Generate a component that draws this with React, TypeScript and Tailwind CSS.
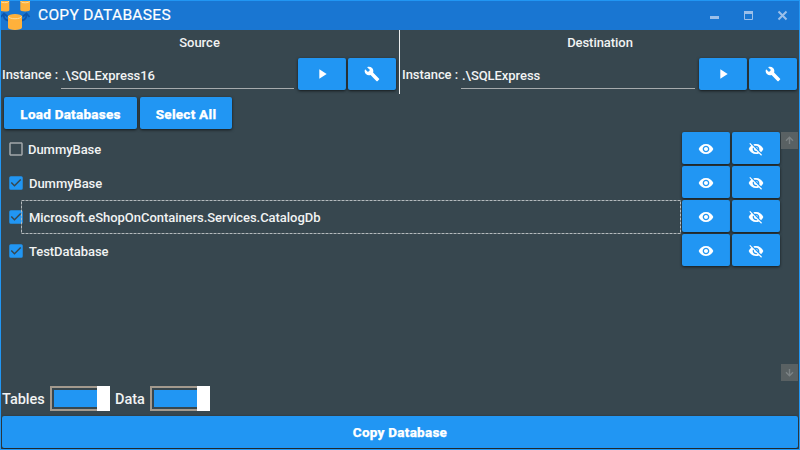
import type { ReactNode } from 'react';
import { MdPlayArrow, MdBuild, MdVisibility, MdVisibilityOff, MdCheckBox, MdCheckBoxOutlineBlank } from 'react-icons/md';

function RaisedButton({ className = '', children }: { className?: string; children: ReactNode }) {
  return (
    <button
      className={`flex h-8 shrink-0 items-center justify-center rounded-[2px] bg-[#2196f3] text-[13.500px] font-extrabold tracking-[0.250px] text-white shadow-[0_1px_3px_rgba(0,0,0,0.65)] [-webkit-text-stroke:0.25px_white] ${className}`}
    >
      {children}
    </button>
  );
}

function Cylinder({ x, y, w, h }: { x: number; y: number; w: number; h: number }) {
  const r = w * 0.17;
  return (
    <g>
      <path
        d={`M${x} ${y + r}v${h - 2 * r}a${w / 2} ${r} 0 0 0 ${w} 0v${-(h - 2 * r)}z`}
        fill="#ffb13b"
      />
      <ellipse cx={x + w / 2} cy={y + r} rx={w / 2} ry={r} fill="#ffb13b" />
      <path d={`M${x + 0.5} ${y + r}a${w / 2 - 0.5} ${r} 0 0 0 ${w - 1} 0`} fill="none" stroke="#ffe0a3" strokeWidth="0.9" />
    </g>
  );
}

function Logo() {
  return (
    <svg width="30" height="29" viewBox="1 1 30 29" className="shrink-0">
      <Cylinder x={0} y={-0.5} w={9.3} h={12} />
      <Cylinder x={20.3} y={-0.5} w={9.7} h={12} />
      <g fill="none" stroke="#0d56ad" strokeWidth="1.8">
        <path d="M8 20.500Q3.500 19.500 3.800 14.500" />
        <path d="M1 17l3-3.500 3.500 3" />
        <path d="M22 20.500Q26.500 19.500 26.500 14.500" />
        <path d="M23 16.500l3.500-3 3 3.500" />
      </g>
      <Cylinder x={8} y={14} w={14} h={16} />
    </svg>
  );
}

function InstancePanel({ title, value, titleClass, labelClass }: { title: string; value: string; titleClass: string; labelClass: string }) {
  return (
    <>
      <div className={`h-7 pt-[3px] text-center text-[13px] leading-[20px] ${titleClass}`}>{title}</div>
      <div className="flex h-8">
        <span className={`shrink-0 whitespace-nowrap pt-[7px] text-[13px] leading-[20px] ${labelClass}`}>Instance :</span>
        <div className="h-[31px] flex-1 border-b border-[#a6abad] pl-[1px] pt-[8px] text-[13px] leading-[20px] tracking-[-0.060px]">
          {value}
        </div>
        <div className="ml-1 flex gap-[2px]">
          <RaisedButton className="w-12"><MdPlayArrow size={16} /></RaisedButton>
          <RaisedButton className="w-12"><MdBuild size={16} /></RaisedButton>
        </div>
      </div>
    </>
  );
}

const databases = [
  { name: 'DummyBase', checked: false, focused: false },
  { name: 'DummyBase', checked: true, focused: false },
  { name: 'Microsoft.eShopOnContainers.Services.CatalogDb', checked: true, focused: true },
  { name: 'TestDatabase', checked: true, focused: false },
];

function DatabaseRow({ name, checked, focused }: { name: string; checked: boolean; focused: boolean }) {
  return (
    <div className="flex h-[34px]">
      <div className="relative flex w-[681px] shrink-0 pl-[6px]">
        {checked ? (
          <MdCheckBox size={18} className="mt-[7.500px] shrink-0 text-[#2196f3]" />
        ) : (
          <MdCheckBoxOutlineBlank size={18} className="mt-[7.500px] shrink-0 text-[#a2a8ab]" />
        )}
        <span className={`pt-[8px] text-[13px] leading-[20px] tracking-[-0.050px] ${checked ? 'ml-1' : 'ml-[3px]'}`}>{name}</span>
        {focused && (
          <svg className="absolute left-[20px] top-0" width="661" height="34">
            <rect x="0.5" y="0.5" width="659" height="33" fill="none" stroke="#b4babd" strokeDasharray="3 1" />
          </svg>
        )}
      </div>
      <div className="flex gap-[2px]">
        <RaisedButton className="w-12 pt-px"><MdVisibility size={16} /></RaisedButton>
        <RaisedButton className="w-12 pt-px"><MdVisibilityOff size={16} /></RaisedButton>
      </div>
    </div>
  );
}

function ScrollButton({ down = false }: { down?: boolean }) {
  return (
    <div className="flex h-[17px] w-[17px] items-center justify-center bg-[#596163]">
      <svg width="9" height="9" viewBox="0 0 9 9" fill="none" stroke="#7b8284" strokeWidth="1.4" className={down ? 'rotate-180' : ''}>
        <path d="M4.500 8V1.500M1 4.800L4.500 1.300 8 4.800" />
      </svg>
    </div>
  );
}

function Toggle() {
  return (
    <div className="flex h-[25px] w-[60px]">
      <div className="h-[25px] w-[47px] border-2 border-r-0 border-[#a39a8e] py-[2px] pl-[2px]">
        <div className="h-[17px] bg-[#2196f3]" />
      </div>
      <div className="h-[25px] w-[13px] bg-white" />
    </div>
  );
}

export default function App() {
  return (
    <div className="flex h-[450px] w-[800px] flex-col overflow-hidden border border-[#2196f3] bg-[#37474f] font-['Roboto',sans-serif] font-medium text-[#f1f3f3]">
      <header className="flex h-[29px] shrink-0 items-center bg-[#1976d2]">
        <Logo />
        <h1 className="ml-[7px] mt-[-1px] text-[15.500px] font-normal leading-[20px] tracking-[0.310px] text-white [-webkit-text-stroke:0.2px_white]">COPY DATABASES</h1>
        <svg className="ml-auto mr-[9px]" width="81" height="15" viewBox="0 0 81 15" fill="none" stroke="#9bbfe9">
          <path d="M1 9.500h9" strokeWidth="3" />
          <path d="M35.500 4v7.500h8V4" />
          <path d="M35 4.500h9" strokeWidth="3" />
          <path d="M69.500 3.500l8 8M77.500 3.500l-8 8" strokeWidth="2" />
        </svg>
      </header>

      <section className="flex h-[64px] shrink-0">
        <div className="w-[398px] pr-[3px]">
          <InstancePanel title="Source" value=".\SQLExpress16" titleClass="pl-[2px]" labelClass="w-[60px] pl-px tracking-[-0.050px]" />
        </div>
        <div className="w-px bg-[#eceff0]" />
        <div className="w-[399px] pr-[2px]">
          <InstancePanel title="Destination" value=".\SQLExpress" titleClass="pl-[3px] tracking-[-0.050px]" labelClass="w-[61px] pl-[2px] tracking-[-0.050px]" />
        </div>
      </section>

      <section className="flex h-[38px] shrink-0 gap-[3px] pl-[3px] pt-[3px]">
        <RaisedButton className="w-[133px] pt-[2px]">Load Databases</RaisedButton>
        <RaisedButton className="w-[92px] pt-[2px]">Select All</RaisedButton>
      </section>

      <section className="flex h-[249px] shrink-0">
        <div className="w-[780px]">
          {databases.map((db, i) => (
            <DatabaseRow key={i} {...db} />
          ))}
        </div>
        <div className="flex flex-col justify-between">
          <ScrollButton />
          <ScrollButton down />
        </div>
      </section>

      <section className="flex h-[35px] shrink-0 pt-[5px]">
        <span className="w-[49px] pl-px pt-[4px] text-[14.500px] leading-[20px]">Tables</span>
        <Toggle />
        <span className="w-[40px] pl-[5px] pt-[4px] text-[14.500px] leading-[20px]">Data</span>
        <Toggle />
      </section>

      <RaisedButton className="mx-px pt-[1px]">Copy Database</RaisedButton>
    </div>
  );
}
